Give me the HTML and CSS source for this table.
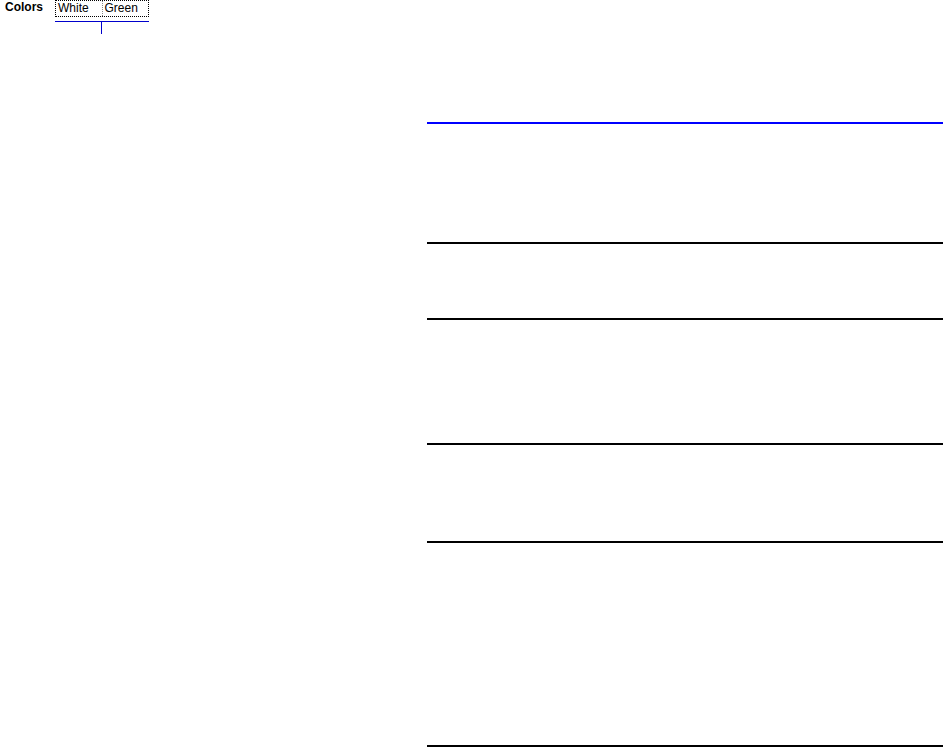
FILE: index.html
```html
<!DOCTYPE html>
<html lang="en">
<head>
    <meta charset="UTF-8">
    <title>Colors</title>
    <link rel="stylesheet" href="styles.css">
</head>
<body>
    <div class="toolbar">
        <span class="label">Colors</span>
        <div class="picker">
            <div class="tabs">
                <span class="tab">White</span>
                <span class="tab">Green</span>
            </div>
            <div class="rule"></div>
            <div class="tick"></div>
        </div>
    </div>

    <div class="panel">
        <div class="section s1"></div>
        <div class="section s2"></div>
        <div class="section s3"></div>
        <div class="section s4"></div>
        <div class="section s5"></div>
    </div>
</body>
</html>
```

FILE: styles.css
```css
body {
    margin: 0;
    background: #fff;
    font-family: "Liberation Sans", Arial, sans-serif;
    font-size: 12px;
    color: #000;
}
.toolbar {
    display: flex;
    align-items: flex-start;
    padding-left: 5px;
}
.label {
    font-weight: bold;
    font-size: 12px;
    line-height: 15px;
    width: 50px;
}
.picker {
    width: 94px;
}
.tabs {
    display: flex;
    border: 1px dotted #000;
    height: 15px;
}
.tab {
    width: 46px;
    line-height: 14px;
    padding-left: 2px;
}
.tab + .tab {
    border-left: 1px dotted #888;
}
.rule {
    margin-top: 4px;
    height: 1px;
    background: #0000cc;
}
.tick {
    margin-left: 46px;
    width: 1px;
    height: 12px;
    background: #0000cc;
}
.panel {
    margin: 88px 0 0 427px;
    border-top: 2px solid #0000ff;
}
.section {
    border-bottom: 2px solid #000;
}
.s1 { height: 118px; }
.s2 { height: 74px; }
.s3 { height: 123px; }
.s4 { height: 96px; }
.s5 { height: 202px; }
```
